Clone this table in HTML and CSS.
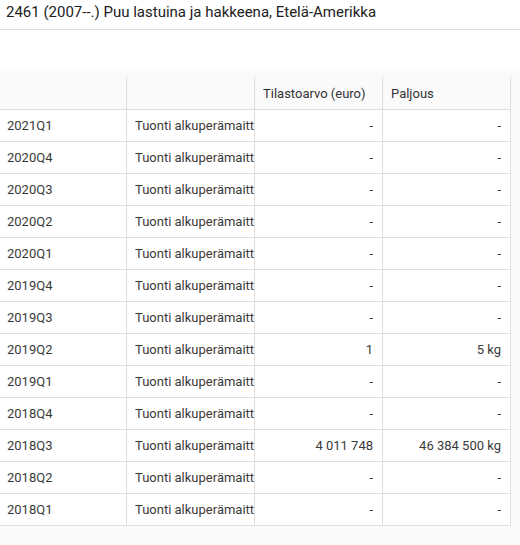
FILE: index.html
```html
<!DOCTYPE html>
<html lang="fi">
<head>
<meta charset="utf-8">
<title>2461 Puu lastuina ja hakkeena</title>
<link rel="stylesheet" href="styles.css">
</head>
<body>
<header class="topbar">
  <h1 class="title">2461 (2007--.) Puu lastuina ja hakkeena, Etelä-Amerikka</h1>
</header>
<div class="spacer"></div>
<main class="content">
  <table class="grid">
    <colgroup>
      <col class="c"><col class="c"><col class="c"><col class="c">
    </colgroup>
    <thead>
      <tr><th></th><th></th><th>Tilastoarvo (euro)</th><th>Paljous</th></tr>
    </thead>
    <tbody>
      <tr><td>2021Q1</td><td class="clip">Tuonti alkuperämaittain</td><td class="num">-</td><td class="num">-</td></tr>
      <tr><td>2020Q4</td><td class="clip">Tuonti alkuperämaittain</td><td class="num">-</td><td class="num">-</td></tr>
      <tr><td>2020Q3</td><td class="clip">Tuonti alkuperämaittain</td><td class="num">-</td><td class="num">-</td></tr>
      <tr><td>2020Q2</td><td class="clip">Tuonti alkuperämaittain</td><td class="num">-</td><td class="num">-</td></tr>
      <tr><td>2020Q1</td><td class="clip">Tuonti alkuperämaittain</td><td class="num">-</td><td class="num">-</td></tr>
      <tr><td>2019Q4</td><td class="clip">Tuonti alkuperämaittain</td><td class="num">-</td><td class="num">-</td></tr>
      <tr><td>2019Q3</td><td class="clip">Tuonti alkuperämaittain</td><td class="num">-</td><td class="num">-</td></tr>
      <tr><td>2019Q2</td><td class="clip">Tuonti alkuperämaittain</td><td class="num">1</td><td class="num">5 kg</td></tr>
      <tr><td>2019Q1</td><td class="clip">Tuonti alkuperämaittain</td><td class="num">-</td><td class="num">-</td></tr>
      <tr><td>2018Q4</td><td class="clip">Tuonti alkuperämaittain</td><td class="num">-</td><td class="num">-</td></tr>
      <tr><td>2018Q3</td><td class="clip">Tuonti alkuperämaittain</td><td class="num">4 011 748</td><td class="num">46 384 500 kg</td></tr>
      <tr><td>2018Q2</td><td class="clip">Tuonti alkuperämaittain</td><td class="num">-</td><td class="num">-</td></tr>
      <tr><td>2018Q1</td><td class="clip">Tuonti alkuperämaittain</td><td class="num">-</td><td class="num">-</td></tr>
    </tbody>
  </table>
</main>
</body>
</html>
```

FILE: styles.css
```css
html, body {
  margin: 0;
  padding: 0;
  height: 100%;
}
body {
  font-family: Roboto, "Noto Sans", Arial, sans-serif;
  color: #333;
  background: #fafafa;
  overflow: hidden;
}
.topbar {
  background: #fff;
  height: 29px;
  border-bottom: 1px solid #dcdcdc;
  box-sizing: content-box;
}
.title {
  margin: 0;
  padding: 2px 0 0 6px;
  font-size: 15px;
  line-height: 20px;
  font-weight: 400;
  color: #222;
}
.spacer {
  height: 39px;
  background: #fff;
}
.content {
  padding-top: 8px;
  background: #fafafa;
}
.grid {
  table-layout: fixed;
  border-collapse: collapse;
  width: 513px;
  margin-left: -2px;
  font-size: 13px;
  color: #3a3a3a;
}
.grid col.c { width: 128px; }
.grid th, .grid td {
  height: 31px;
  padding: 0 9px 0 8px;
  border: 1px solid #dedede;
  white-space: nowrap;
  overflow: hidden;
  text-align: left;
  font-weight: 400;
}
.grid thead th {
  height: 32px;
  border-top: none;
  background: transparent;
  color: #333;
}
.grid tbody td { background: #fff; }
.grid td.clip { padding-right: 0; text-overflow: clip; }
.grid td.num { text-align: right; }
```
